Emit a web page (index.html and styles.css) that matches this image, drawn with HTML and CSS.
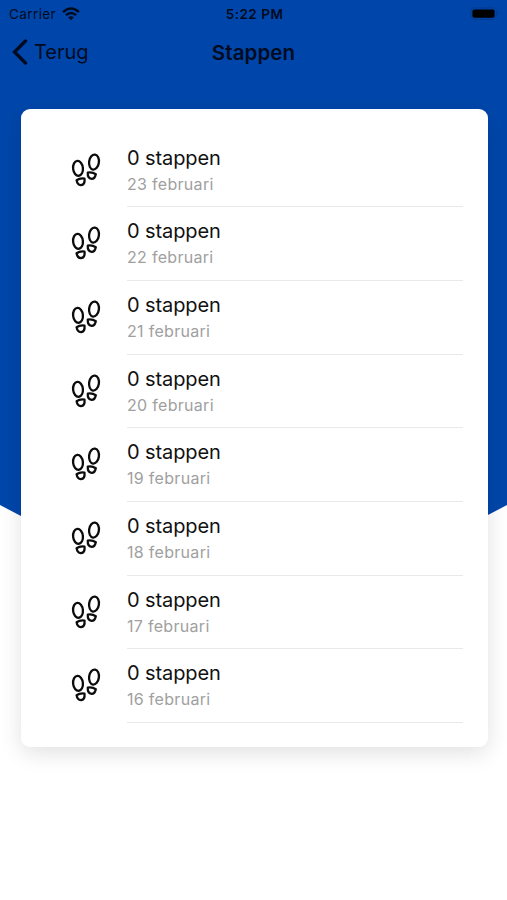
FILE: index.html
```html
<!DOCTYPE html>
<html lang="nl">
<head>
<meta charset="utf-8">
<title>Stappen</title>
<link rel="stylesheet" href="styles.css">
</head>
<body>
<svg class="sprite" aria-hidden="true">
  <symbol id="steps" viewBox="0 0 30 34">
    <g fill="none" stroke="#0c0c0c" stroke-width="2.3" stroke-linejoin="round">
      <ellipse cx="7" cy="15.3" rx="4.9" ry="7.5" transform="rotate(-6 7 15.3)"/>
      <ellipse cx="23" cy="9.1" rx="4.9" ry="7.5" transform="rotate(8 23 9.1)"/>
      <path d="M5.6 27.2Q9 24.9 13.5 25.6Q14.2 31.8 9.9 32.2Q6.3 32 5.6 27.2Z"/>
      <path d="M16.8 19.6Q21.5 18.9 24.8 21.2Q23.8 25.8 20.7 25.9Q16.4 25.4 16.8 19.6Z"/>
    </g>
  </symbol>
</svg>
<div class="screen">
  <div class="status">
    <div class="carrier"><span class="carrier-name">Carrier</span>
      <svg class="wifi" viewBox="0 0 18 14">
        <g fill="none" stroke="#000b20" stroke-width="2.4">
          <path d="M1 5.1Q9-2.1 17 5.1"/>
          <path d="M3.9 8.2Q9 3.7 14.1 8.2"/>
        </g>
        <path d="M6.1 10.3Q9 8 11.9 10.3L9 13.3Z" fill="#000b20"/>
      </svg>
    </div>
    <div class="time">5:22 PM</div>
    <svg class="battery" viewBox="0 0 30 14">
      <rect x=".7" y=".9" width="25.6" height="11.5" rx="3.2" fill="none" stroke="#003b91"/>
      <rect x="2.4" y="2.6" width="22.2" height="8.2" rx="1.8" fill="#000"/>
      <path d="M27.7 4.8Q30.3 6.6 27.7 8.5Z" fill="#003b91"/>
    </svg>
  </div>
  <div class="nav">
    <div class="back">
      <svg class="chevron" viewBox="0 0 16 26"><path d="M13.5 2L2.5 13L13.5 24" fill="none" stroke="#000b20" stroke-width="3.3" stroke-linecap="round"/></svg>
      <span class="back-label">Terug</span>
    </div>
    <div class="title">Stappen</div>
  </div>
  <div class="card">
    <div class="row"><svg class="icon"><use href="#steps"/></svg><div class="info"><div class="count">0 stappen</div><div class="date">23 februari</div></div></div>
    <div class="row"><svg class="icon"><use href="#steps"/></svg><div class="info"><div class="count">0 stappen</div><div class="date">22 februari</div></div></div>
    <div class="row"><svg class="icon"><use href="#steps"/></svg><div class="info"><div class="count">0 stappen</div><div class="date">21 februari</div></div></div>
    <div class="row"><svg class="icon"><use href="#steps"/></svg><div class="info"><div class="count">0 stappen</div><div class="date">20 februari</div></div></div>
    <div class="row"><svg class="icon"><use href="#steps"/></svg><div class="info"><div class="count">0 stappen</div><div class="date">19 februari</div></div></div>
    <div class="row"><svg class="icon"><use href="#steps"/></svg><div class="info"><div class="count">0 stappen</div><div class="date">18 februari</div></div></div>
    <div class="row"><svg class="icon"><use href="#steps"/></svg><div class="info"><div class="count">0 stappen</div><div class="date">17 februari</div></div></div>
    <div class="row"><svg class="icon"><use href="#steps"/></svg><div class="info"><div class="count">0 stappen</div><div class="date">16 februari</div></div></div>
  </div>
</div>
</body>
</html>
```
FILE: styles.css
```css
* { box-sizing: border-box; }
body { margin: 0; background: #fff; font-family: Inter, "Liberation Sans", sans-serif; }
.sprite { display: none; }
.screen { position: relative; height: 900px; overflow: hidden; color: #000b20; }
.screen::before {
  content: "";
  position: absolute;
  inset: 0 0 auto;
  z-index: -1;
  height: 640px;
  background: #0046aa;
  clip-path: polygon(0 0, 100% 0, 100% 505px, 50% 638px, 0 505px);
}
.status {
  display: grid;
  grid-template-columns: 1fr auto 1fr;
  align-items: center;
  height: 27px;
  padding: 0 7px 0 9px;
}
.carrier { display: flex; align-items: center; gap: 6px; font-size: 13.5px; letter-spacing: .4px; }
.wifi { width: 18px; height: 14px; }
.time { font-size: 13.5px; font-weight: 600; letter-spacing: .5px; }
.battery { justify-self: end; width: 30px; height: 14px; }
.nav {
  display: grid;
  grid-template-columns: 1fr auto 1fr;
  align-items: center;
  height: 50px;
  padding: 0 12px;
}
.back { display: flex; align-items: center; gap: 6px; font-size: 20px; }
.chevron { width: 16px; height: 26px; }
.title { font-size: 20.5px; font-weight: 600; letter-spacing: .1px; }
.card {
  width: 467px;
  height: 638px;
  margin: 31.5px 0 0 20.5px;
  padding: 25px 24.5px 0 50px;
  border-radius: 9px;
  background: #fff;
  box-shadow: 0 6px 22px rgba(0, 0, 0, .12);
}
.row { display: flex; height: 73.7px; }
.icon { width: 30px; height: 34px; margin: 19px 26.5px 0 0; flex: none; }
.info { flex: 1; padding-top: 11px; border-bottom: 1.5px solid #e9e9e9; }
.count { font-size: 20px; line-height: 26px; letter-spacing: -.1px; color: #111; }
.date { font-size: 16px; line-height: 26px; letter-spacing: .3px; color: #a0a0a0; }
```
